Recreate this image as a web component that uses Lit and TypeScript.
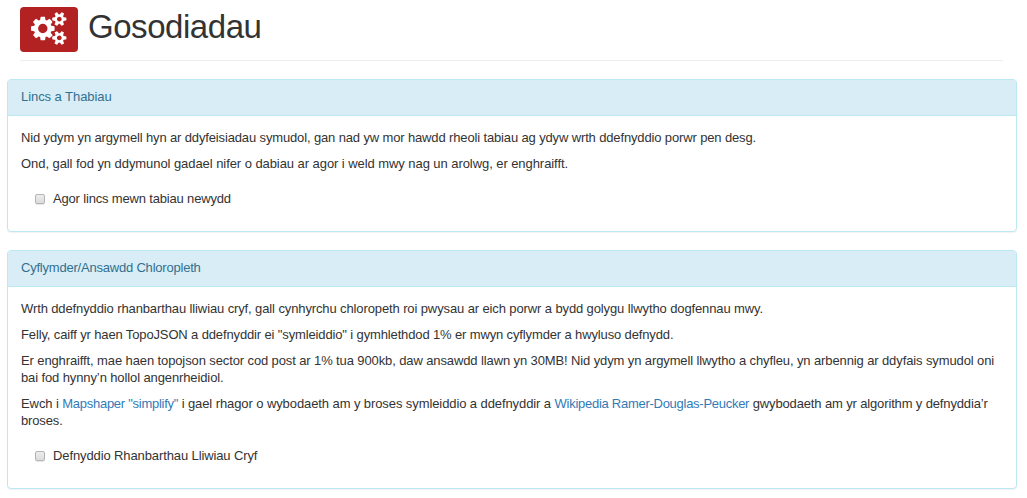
import { LitElement, html, css, svg } from "lit";
import { customElement, property } from "lit/decorators.js";

const cogs = svg`<path d="M896 896q0-106-75-181t-181-75-181 75-75 181 75 181 181 75 181-75 75-181zm768 512q0-52-38-90t-90-38-90 38-38 90q0 53 37.5 90.5t90.5 37.5 90.5-37.5 37.5-90.5zm0-1024q0-52-38-90t-90-38-90 38-38 90q0 53 37.5 90.5t90.5 37.5 90.5-37.5 37.5-90.5zm-384 421v185q0 10-7 19.5t-16 10.5l-155 24q-11 35-32 76 34 48 90 115 7 11 7 20 0 12-7 19-23 30-82.5 89.5t-78.5 59.5q-11 0-21-7l-115-90q-37 19-77 31-11 108-23 155-7 24-30 24h-186q-11 0-20-7.5t-10-17.5l-23-153q-34-10-75-31l-118 89q-7 7-20 7-11 0-21-8-144-133-144-160 0-9 7-19 10-14 41-53t47-61q-23-44-35-82l-152-24q-10-1-17-9.5t-7-19.5v-185q0-10 7-19.5t16-10.5l155-24q11-35 32-76-34-48-90-115-7-11-7-20 0-12 7-20 22-30 82-89t79-59q11 0 21 7l115 90q34-18 77-32 11-108 23-154 7-24 30-24h186q11 0 20 7.5t10 17.5l23 153q34 10 75 31l118-89q8-7 20-7 11 0 21 8 144 133 144 160 0 8-7 19-12 16-42 54t-45 60q23 48 34 82l152 23q10 2 17 10.5t7 19.5zm640 533v140q0 16-149 31-12 27-30 52 51 113 51 138 0 4-4 7-122 71-124 71-8 0-46-47t-52-68q-20 2-30 2t-30-2q-14 21-52 68t-46 47q-2 0-124-71-4-3-4-7 0-25 51-138-18-25-30-52-149-15-149-31v-140q0-16 149-31 13-29 30-52-51-113-51-138 0-4 4-7 4-2 35-20t59-34 30-16q8 0 46 46.5t52 67.5q20-2 30-2t30 2q51-71 92-112l6-2q4 0 124 70 4 3 4 7 0 25-51 138 17 23 30 52 149 15 149 31zm0-1024v140q0 16-149 31-12 27-30 52 51 113 51 138 0 4-4 7-122 71-124 71-8 0-46-47t-52-68q-20 2-30 2t-30-2q-14 21-52 68t-46 47q-2 0-124-71-4-3-4-7 0-25 51-138-18-25-30-52-149-15-149-31v-140q0-16 149-31 13-29 30-52-51-113-51-138 0-4 4-7 4-2 35-20t59-34 30-16q8 0 46 46.5t52 67.5q20-2 30-2t30 2q51-71 92-112l6-2q4 0 124 70 4 3 4 7 0 25-51 138 17 23 30 52 149 15 149 31z"/>`;

@customElement("settings-panel")
class SettingsPanel extends LitElement {
  @property() heading = "";
  @property() option = "";

  static styles = css`
    :host {
      display: block;
      box-sizing: border-box;
      border: 1px solid #bce8f1;
      border-radius: 4px;
      background: #fff;
      box-shadow: 0 1px 1px rgba(0, 0, 0, 0.05);
    }
    .heading {
      box-sizing: border-box;
      height: 36px;
      padding: 8px 13px;
      line-height: 18px;
      letter-spacing: var(--heading-spacing, 0);
      color: #31708f;
      background: #d9edf7;
      border-bottom: 1px solid #bce8f1;
      border-radius: 3px 3px 0 0;
    }
    .body {
      padding: 13px 13px 24px;
    }
    .option {
      display: flex;
      align-items: center;
      gap: 8px;
      margin: 18px 0 0 14px;
      height: 17px;
      letter-spacing: var(--option-spacing, 0);
    }
    .box {
      appearance: none;
      box-sizing: border-box;
      width: 10px;
      height: 10px;
      margin: 0;
      border: 1px solid #b4b4b4;
      border-radius: 2px;
      background: linear-gradient(#ededed, #dcdcdc);
      box-shadow: 0 1px 1px rgba(0, 0, 0, 0.1);
    }
  `;

  render() {
    return html`
      <div class="heading">${this.heading}</div>
      <div class="body">
        <slot></slot>
        <label class="option"><input class="box" type="checkbox" />${this.option}</label>
      </div>
    `;
  }
}

@customElement("app-root")
class AppRoot extends LitElement {
  static styles = css`
    :host {
      display: block;
      box-sizing: border-box;
      height: 498px;
      padding: 7px 10px 0 7px;
      overflow: hidden;
      background: #fff;
      color: #333;
      font: 13px/17px "Liberation Sans", Arial, sans-serif;
    }
    .header {
      box-sizing: border-box;
      display: flex;
      gap: 10px;
      height: 54px;
      margin: 0 14px 18px 13px;
      border-bottom: 1px solid #eee;
    }
    .badge {
      box-sizing: border-box;
      display: flex;
      align-items: center;
      justify-content: center;
      width: 58px;
      height: 45px;
      padding-bottom: 2px;
      border-radius: 4px;
      background: #b22222;
    }
    .icon {
      width: 35.4px;
      height: 33px;
      fill: #fff;
    }
    .title {
      margin: 0;
      font-size: 33px;
      font-weight: 400;
      line-height: 40px;
      letter-spacing: -0.45px;
    }
    .links {
      --heading-spacing: -0.06px;
      --option-spacing: -0.17px;
    }
    .quality {
      --heading-spacing: -0.21px;
      --option-spacing: -0.11px;
      margin-top: 18px;
    }
    .text {
      margin: 0 0 9px;
    }
    .devices {
      letter-spacing: -0.139px;
    }
    .tabs {
      letter-spacing: -0.065px;
    }
    .regions {
      letter-spacing: -0.115px;
    }
    .simplified {
      letter-spacing: -0.135px;
    }
    .example {
      letter-spacing: -0.113px;
    }
    .sources {
      letter-spacing: -0.09px;
    }
    .tail {
      letter-spacing: -0.14px;
    }
    .link {
      color: #337ab7;
      text-decoration: none;
      letter-spacing: -0.27px;
    }
  `;

  render() {
    return html`
      <header class="header">
        <span class="badge"><svg class="icon" viewBox="0 0 1920 1792">${cogs}</svg></span>
        <h1 class="title">Gosodiadau</h1>
      </header>
      <settings-panel class="links" heading="Lincs a Thabiau" option="Agor lincs mewn tabiau newydd">
        <p class="text devices">Nid ydym yn argymell hyn ar ddyfeisiadau symudol, gan nad yw mor hawdd rheoli tabiau ag ydyw wrth ddefnyddio porwr pen desg.</p>
        <p class="text tabs">Ond, gall fod yn ddymunol gadael nifer o dabiau ar agor i weld mwy nag un arolwg, er enghraifft.</p>
      </settings-panel>
      <settings-panel class="quality" heading="Cyflymder/Ansawdd Chloropleth" option="Defnyddio Rhanbarthau Lliwiau Cryf">
        <p class="text regions">Wrth ddefnyddio rhanbarthau lliwiau cryf, gall cynhyrchu chloropeth roi pwysau ar eich porwr a bydd golygu llwytho dogfennau mwy.</p>
        <p class="text simplified">Felly, caiff yr haen TopoJSON a ddefnyddir ei "symleiddio" i gymhlethdod 1% er mwyn cyflymder a hwyluso defnydd.</p>
        <p class="text example">Er enghraifft, mae haen topojson sector cod post ar 1% tua 900kb, daw ansawdd llawn yn 30MB! Nid ydym yn argymell llwytho a chyfleu, yn arbennig ar ddyfais symudol oni bai fod hynny’n hollol angenrheidiol.</p>
        <p class="text sources">Ewch i <a class="link" href="#">Mapshaper "simplify"</a> i gael rhagor o wybodaeth am y broses symleiddio a ddefnyddir a <a class="link" href="#">Wikipedia Ramer-Douglas-Peucker</a> <span class="tail">gwybodaeth am yr algorithm y defnyddia’r broses.</span></p>
      </settings-panel>
    `;
  }
}
